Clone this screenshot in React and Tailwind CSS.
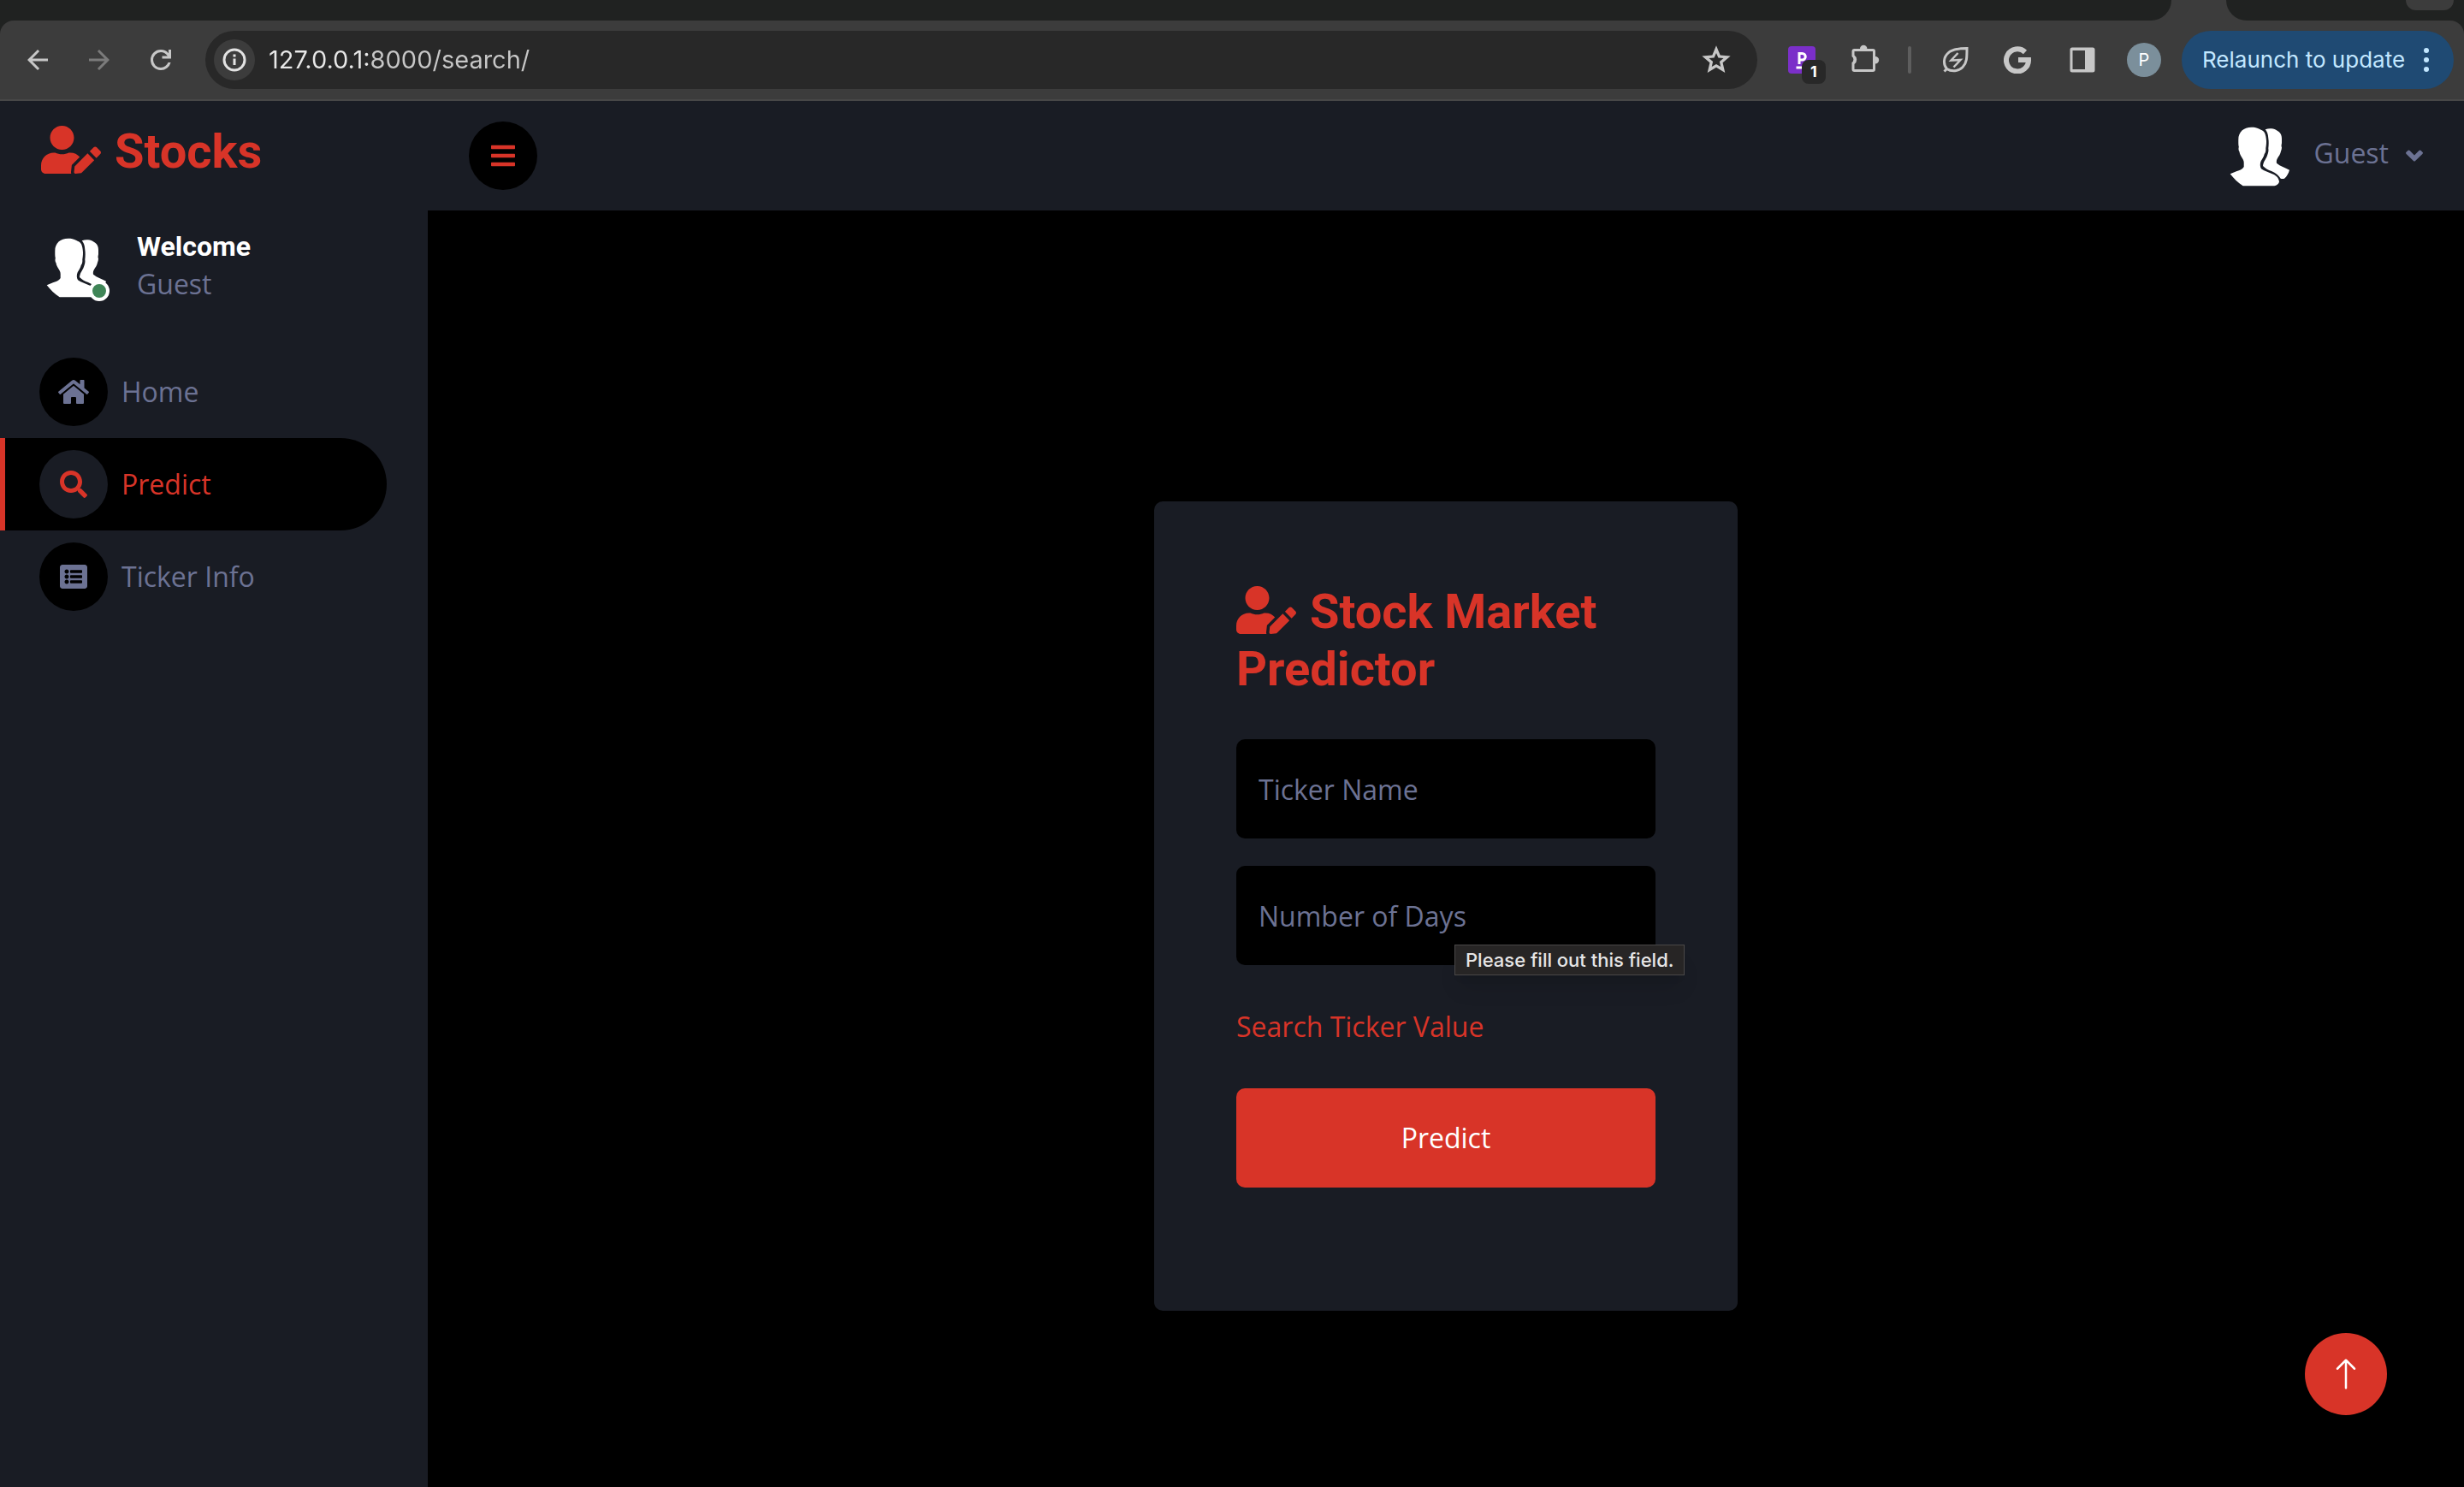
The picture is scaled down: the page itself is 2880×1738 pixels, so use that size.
import React from "react";
import { FaUserEdit, FaBars, FaHome, FaSearch, FaListAlt } from "react-icons/fa";
import { BsArrowUp } from "react-icons/bs";

const iconButton = "flex size-12 shrink-0 items-center justify-center";

function GuestAvatar() {
  return (
    <svg viewBox="0 0 80 80" className="size-20 shrink-0" fill="#fff" aria-hidden="true">
      <path d="M31.700 6.700C22.500 6.700 16.300 12 16.300 21.300c0 3.500-.1 6.500.5 8.500-.6 2-.3 4.300.7 5.500.3 2.500 1.300 4.200 2.500 6.200 1.500 2.500 2.700 4 2.700 6.500v5c-2.500 4.300-9.500 5-16 8.300 4.500 5.200 9 10.500 15 14h36.600c2.700-.6 4.700-2 5.700-4.600-.2-2.200-1-4-2.300-5.700-2.300-2.400-4.500-3.300-7-4.300-4-1.700-8-2.600-11.700-5.400-1.500-2.500-1.600-6-.3-9 1.600-2.600 3.400-5.300 4-8.300 1.300-1.600 1.900-3.700 1.600-6.700.7-4 1-8 .4-11.600-.4-3.200-1-5.700-2.600-7.700-1.300-1.600-3-2.200-4.800-3.100-3-1.700-6.200-2.200-9.600-2.200z" />
      <path d="M47.700 9.300c2.500-1 5-1.200 7.300-1 2.600.3 4.700 1 6.700 2.400 2.800 1.300 4.500 3.600 5 6.600.5 2.700.3 5.400.3 8-.6 2.600-.6 3.600 0 5.200-.1 1.600-.4 3-1 4.200-.5 3.400-2.400 5.600-4 8.300-1.200 2-1.300 3.700-1 5.700 4.500 3.800 9.500 5 15 8-1.200 4-3 7.500-6 10-1.600.6-2.800.4-4.300 0-1.200-1.800-2.400-3.400-4-4.700-2-1.600-4.300-2.800-6.700-4-3.700-1.500-7-2.700-10-6 .3-2.200.7-4 1.700-5.700 1.200-2.200 2.600-4.300 3.300-6.600 1.200-2.700 1.800-5.500 1.300-8.400.5-3.900.6-7.800 0-11.600-.2-2.400-.4-4.500-1.300-6.700-.6-1.400-1.300-2.500-2.300-3.700z" />
    </svg>
  );
}

function BrowserBar() {
  return (
    <header className="bg-[#202221] font-[Inter,sans-serif]">
      <div className="flex h-6 bg-[#3c3c3c]">
        <div className="flex-1 rounded-br-3xl bg-[#202221]" />
        <div className="w-16" />
        <div className="flex w-[278px] justify-end rounded-bl-3xl bg-[#202221] pr-3">
          <div className="h-3 w-14 rounded-b-2xl bg-[#3c3c3c]" />
        </div>
      </div>
      <div className="flex h-[94px] items-center rounded-t-2xl border-b-2 border-[#474747] bg-[#3c3c3c] pr-3 pl-5">
        <nav aria-label="Browser" className="flex items-center gap-6 text-[#c7c7c7]">
          <button aria-label="Back" className={iconButton}>
            <svg viewBox="0 0 24 24" className="size-9" fill="currentColor"><path d="M7.800 13l5.600 5.600L12 20l-8-8 8-8 1.400 1.400L7.800 11H20v2z" /></svg>
          </button>
          <button aria-label="Forward" className={iconButton + " text-[#7b7b7b]"}>
            <svg viewBox="0 0 24 24" className="size-9" fill="currentColor"><path d="M16.200 13H4v-2h12.200l-5.600-5.600L12 4l8 8-8 8-1.400-1.400z" /></svg>
          </button>
          <button aria-label="Reload" className={iconButton}>
            <svg viewBox="0 0 24 24" className="size-9" fill="currentColor"><path d="M12 20q-3.350 0-5.675-2.325T4 12t2.325-5.675T12 4q1.725 0 3.300.713T18 6.750V4h2v7h-7V9h4.200q-.8-1.400-2.187-2.200T12 6Q9.500 6 7.750 7.750T6 12t1.750 4.250T12 18q1.925 0 3.475-1.100T17.650 14h2.100q-.7 2.650-2.850 4.325T12 20" /></svg>
          </button>
        </nav>
        <div className="ml-7 flex h-[68px] flex-1 items-center rounded-full bg-[#282828] pr-6 pl-2.5">
          <button aria-label="Site information" className="flex size-12 shrink-0 items-center justify-center rounded-full bg-[#3c3c3c] text-[#e3e3e3]">
            <svg viewBox="0 0 28 28" className="size-7" fill="none" stroke="currentColor" strokeWidth="3"><circle cx="14" cy="14" r="12" /><path d="M14 12.500V20M14 7.500v3" /></svg>
          </button>
          <input
            aria-label="Address"
            defaultValue="127.0.0.1:8000/search/"
            className="ml-4 min-w-0 flex-1 bg-[linear-gradient(to_right,#e8e8e8_118px,#c7c7c7_118px)] bg-clip-text text-[29px] leading-9 text-transparent outline-none"
          />
          <button aria-label="Bookmark this tab" className={iconButton + " text-[#c7c7c7]"}>
            <svg viewBox="0 0 24 24" className="size-10" fill="currentColor"><path d="m8.850 16.825 3.150-1.900 3.150 1.925-.825-3.600 2.775-2.400-3.650-.325-1.450-3.400-1.450 3.375-3.650.325 2.775 2.425zM5.825 21l1.625-7.025L2 9.250l7.200-.625L12 2l2.800 6.625 7.200.625-5.450 4.725L18.175 21 12 17.275z" /></svg>
          </button>
        </div>
        <div className="flex items-center pl-7 text-[#c7c7c7]">
          <button aria-label="Extension, 1 notification" className="relative flex size-12 items-center justify-center">
            <svg viewBox="0 0 32 32" className="size-8"><rect width="32" height="32" rx="4" fill="#7b2fc9" /><path d="M13 21V8.500h3.500a3.700 3.700 0 0 1 0 7.500H13M9.500 25H16" fill="none" stroke="#fff" strokeWidth="3" /></svg>
            <span className="absolute top-6 left-6 flex size-7 items-center justify-center rounded-lg bg-[#282828] text-lg font-bold text-white">1</span>
          </button>
          <button aria-label="Extensions" className={iconButton + " ml-[26px]"}>
            <svg viewBox="0 0 36 36" className="size-9" fill="currentColor"><path fillRule="evenodd" d="M5.500 5H12a4.200 4.200 0 0 1 8.400 0h6.500A3 3 0 0 1 30 8v6a4.200 4.200 0 0 1 0 8.400v6.500a3 3 0 0 1-3 3H5.500a3 3 0 0 1-3-3v-8a4.200 4.200 0 0 0 0-7V8a3 3 0 0 1 3-3zM5.500 8v4.500a6.500 6.500 0 0 1 0 10.500v6H27V8z" /></svg>
          </button>
          <span className="mr-7 ml-[26px] h-8 w-1 rounded bg-[#5e5e5e]" />
          <button aria-label="Energy saver" className={iconButton}>
            <svg viewBox="0 0 32 32" className="size-8" fill="none" stroke="currentColor" strokeWidth="3"><path d="M5.500 26.500C1 21 1.500 13 7 8c5-4.500 12-5.500 22-5.500 0 11 0 17-5 22s-13 5.500-18.500 2zm0 0L2.500 29.500" /><path d="M18.500 8 10.500 16.500l11-.5-8 8.500" strokeWidth="2.500" /></svg>
          </button>
          <button aria-label="Google" className={iconButton + " ml-6"}>
            <svg viewBox="0 0 32 32" className="size-8" fill="none" stroke="currentColor" strokeWidth="6"><path d="M25 7A13 13 0 1 0 29 16H17" /></svg>
          </button>
          <button aria-label="Side panel" className={iconButton + " ml-7"}>
            <svg viewBox="0 0 30 30" className="size-[30px]" fill="currentColor"><path fillRule="evenodd" d="M3 .5h24A2.500 2.500 0 0 1 29.500 3v24a2.500 2.500 0 0 1-2.500 2.500H3A2.500 2.500 0 0 1 .5 27V3A2.500 2.500 0 0 1 3 .5zM3.500 4v22H18V4z" /></svg>
          </button>
          <button aria-label="Profile" className="ml-7 flex size-10 items-center justify-center rounded-full bg-[#7b8f9b] text-xl text-white">P</button>
        </div>
        <button className="ml-6 flex h-[68px] w-[318px] items-center justify-between rounded-full bg-[#1f4a73] pr-7 pl-6 text-[26px] whitespace-nowrap text-[#c2e7ff]">
          Relaunch to update
          <svg viewBox="0 0 8 28" className="h-7 w-2" fill="currentColor"><circle cx="4" cy="3" r="3" /><circle cx="4" cy="14" r="3" /><circle cx="4" cy="25" r="3" /></svg>
        </button>
      </div>
    </header>
  );
}

const links = [
  { label: "Home", Icon: FaHome },
  { label: "Predict", Icon: FaSearch, active: true },
  { label: "Ticker Info", Icon: FaListAlt },
];

function Sidebar() {
  return (
    <aside className="w-[500px] shrink-0 bg-[#191c24] pt-6">
      <a href="#" className="block pl-12 font-[Roboto,sans-serif] text-[56px] leading-[70px] font-bold text-[#d83428]">
        <FaUserEdit className="mr-4 inline-block h-14 w-[70px] align-[-7px]" />Stocks
      </a>
      <div className="mt-14 mb-12 flex items-center gap-8 pl-12">
        <div className="relative">
          <GuestAvatar />
          <span className="absolute right-0 bottom-0 size-6 rounded-full border-4 border-white bg-[#3f8557]" />
        </div>
        <div>
          <h6 className="font-[Roboto,sans-serif] leading-10 font-bold text-white">Welcome</h6>
          <span className="block">Guest</span>
        </div>
      </div>
      <nav className="pr-12">
        {links.map(({ label, Icon, active }) => (
          <a
            key={label}
            href="#"
            className={
              "flex h-[108px] items-center gap-4 rounded-r-full border-l-[6px] pl-10 " +
              (active ? "border-[#d83428] bg-black text-[#d83428]" : "border-[#191c24]")
            }
          >
            <span className={"flex size-20 items-center justify-center rounded-full " + (active ? "bg-[#191c24]" : "bg-black")}>
              <Icon className="h-8 w-9" />
            </span>
            {label}
          </a>
        ))}
      </nav>
    </aside>
  );
}

function PredictForm() {
  const field = "block h-[116px] w-full rounded-[10px] bg-black px-[26px] text-[#6c7293] outline-none placeholder:text-[#6c7293]";
  return (
    <form className="w-[682px] rounded-[10px] bg-[#191c24] px-24 pt-24 pb-36" onSubmit={(e) => e.preventDefault()}>
      <h3 className="mb-12 font-[Roboto,sans-serif] text-[56px] leading-[67px] font-bold text-[#d83428]">
        <FaUserEdit className="mr-4 inline-block h-14 w-[70px] align-[-7px]" />Stock Market Predictor
      </h3>
      <input aria-label="Ticker Name" placeholder="Ticker Name" className={field + " mb-8"} />
      <div className="relative mb-12">
        <input aria-label="Number of Days" placeholder="Number of Days" className={field} />
        <div role="tooltip" className="absolute top-[92px] left-[255px] h-9 border border-[#4a4848] bg-[#272525] px-3 font-[Inter,sans-serif] text-[22px] leading-[34px] font-medium whitespace-nowrap text-[#e6e5e5] shadow-xl">
          Please fill out this field.
        </div>
      </div>
      <a href="#" className="mb-12 block text-[#d83428]">Search Ticker Value</a>
      <button className="h-[116px] w-full rounded-[10px] bg-[#d83428] text-white">Predict</button>
    </form>
  );
}

export default function App() {
  return (
    <div className="flex h-screen flex-col overflow-hidden bg-black font-['Open_Sans',sans-serif] text-[32px] leading-[48px] text-[#6c7293]">
      <BrowserBar />
      <div className="flex flex-1">
        <Sidebar />
        <div className="flex flex-1 flex-col">
          <header className="flex h-32 items-center justify-between bg-[#191c24] px-12">
            <button aria-label="Toggle sidebar" className="flex size-20 items-center justify-center rounded-full bg-black text-[#d83428]">
              <FaBars />
            </button>
            <button className="flex items-center">
              <GuestAvatar />
              <span className="mr-5 ml-6 pb-1.5">Guest</span>
              <svg viewBox="0 0 20 14" className="h-3.5 w-5" fill="currentColor" aria-hidden="true">
                <path d="M8.900 13.100.6 5a1.600 1.600 0 0 1 0-2.300L2.300 1a1.600 1.600 0 0 1 2.300 0L10 6.400 15.400 1a1.600 1.600 0 0 1 2.300 0l1.700 1.700a1.600 1.600 0 0 1 0 2.300l-8.300 8.100a1.600 1.600 0 0 1-2.200 0z" />
              </svg>
            </button>
          </header>
          <main className="flex flex-1 items-start justify-center pt-[340px]">
            <PredictForm />
          </main>
        </div>
      </div>
      <a href="#" aria-label="Back to top" className="fixed right-[90px] bottom-[84px] flex size-24 items-center justify-center rounded-full bg-[#d83428] text-white">
        <BsArrowUp className="size-10" />
      </a>
    </div>
  );
}
